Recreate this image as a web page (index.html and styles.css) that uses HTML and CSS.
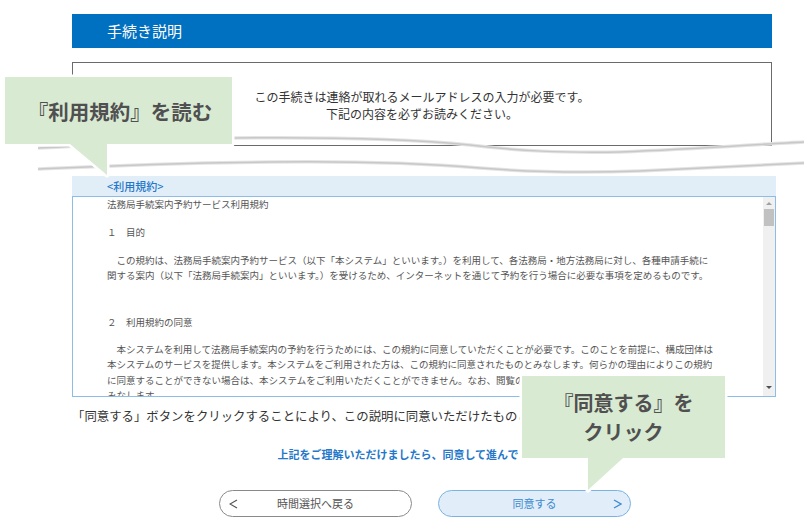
FILE: index.html
```html
<!DOCTYPE html>
<html lang="ja">
<head>
<meta charset="utf-8">
<title>手続き説明</title>
<link rel="stylesheet" href="styles.css">
</head>
<body>
<div class="page">
  <div class="titlebar">手続き説明</div>
  <div class="notice">
    <p>この手続きは連絡が取れるメールアドレスの入力が必要です。</p>
    <p>下記の内容を必ずお読みください。</p>
  </div>
  <div class="terms">
    <div class="terms-head">&lt;利用規約&gt;</div>
    <div class="terms-box">
      <div class="terms-text">
        <p class="t-title">法務局手続案内予約サービス利用規約</p>
        <p class="t-head">１　目的</p>
        <p class="t-para">　この規約は、法務局手続案内予約サービス（以下「本システム」といいます。）を利用して、各法務局・地方法務局に対し、各種申請手続に<br>関する案内（以下「法務局手続案内」といいます。）を受けるため、インターネットを通じて予約を行う場合に必要な事項を定めるものです。</p>
        <p class="t-head t-head2">２　利用規約の同意</p>
        <p class="t-para t-para2">　本システムを利用して法務局手続案内の予約を行うためには、この規約に同意していただくことが必要です。このことを前提に、構成団体は<br>本システムのサービスを提供します。本システムをご利用された方は、この規約に同意されたものとみなします。何らかの理由によりこの規約<br>に同意することができない場合は、本システムをご利用いただくことができません。なお、閲覧のみの場合でも、この規約に同意したものと<br>みなします。</p>
      </div>
      <div class="scrollbar">
        <span class="arrow-up"></span>
        <span class="thumb"></span>
        <span class="track"></span>
        <span class="arrow-down"></span>
      </div>
    </div>
  </div>
  <p class="agree-note">「同意する」ボタンをクリックすることにより、この説明に同意いただけたものとみなします。</p>
  <p class="proceed">上記をご理解いただけましたら、同意して進んでください。</p>
  <div class="buttons">
    <button class="btn btn-back" type="button">
      <svg class="chev chev-left" width="9" height="10" viewBox="0 0 9 10"><polyline points="8,1 1,5 8,9" fill="none" stroke="#555" stroke-width="1.2"/></svg>
      時間選択へ戻る
    </button>
    <button class="btn btn-agree" type="button">
      同意する
      <svg class="chev chev-right" width="9" height="10" viewBox="0 0 9 10"><polyline points="1,1 8,5 1,9" fill="none" stroke="#3d8bd0" stroke-width="1.3"/></svg>
    </button>
  </div>
</div>

<svg class="tear" width="804" height="50" viewBox="0 0 804 50">
  <path d="M38 18 C 90 16, 160 9, 233 8 C 330 7, 420 10, 470 15 C 520 21, 560 23, 620 22 C 700 19, 760 14, 804 12" fill="none" stroke="#e4e4e4" stroke-width="3.5"/>
  <path d="M38 18 C 90 16, 160 9, 233 8 C 330 7, 420 10, 470 15 C 520 21, 560 23, 620 22 C 700 19, 760 14, 804 12" fill="none" stroke="#c8c8c8" stroke-width="1.5"/>
  <path d="M38 39 C 80 37, 160 33, 270 32 C 350 31, 420 33, 480 38 C 530 42, 580 43, 640 41 C 710 38, 760 35, 804 33" fill="none" stroke="#e4e4e4" stroke-width="3.5"/>
  <path d="M38 39 C 80 37, 160 33, 270 32 C 350 31, 420 33, 480 38 C 530 42, 580 43, 640 41 C 710 38, 760 35, 804 33" fill="none" stroke="#c8c8c8" stroke-width="1.5"/>
</svg>

<div class="callout callout-read">
  <svg class="bubble" width="237" height="108" viewBox="-5 -5 237 108"><path d="M0 0 H227 V67 H102 V98 L65 67 H0 Z" fill="#d9ead3" stroke="#ffffff" stroke-width="5" stroke-linejoin="round" paint-order="stroke"/></svg>
  <span class="callout-text">『利用規約』を読む</span>
</div>
<div class="callout callout-click">
  <svg class="bubble" width="213" height="124" viewBox="-5 -5 213 124"><path d="M0 0 H203 V82 H101 L66 114 V82 H0 Z" fill="#d9ead3" stroke="#ffffff" stroke-width="5" stroke-linejoin="round" paint-order="stroke"/></svg>
  <span class="callout-text">『同意する』を<br>クリック</span>
</div>
</body>
</html>
```

FILE: styles.css
```css
html, body {
  margin: 0;
  padding: 0;
}

body {
  position: relative;
  width: 804px;
  height: 523px;
  overflow: hidden;
  background: #ffffff;
  color: #333333;
  font-family: "Noto Sans CJK JP", "Noto Sans", "Liberation Sans", sans-serif;
}

p {
  margin: 0;
}

.page {
  margin-left: 72px;
  width: 704px;
  padding-top: 14px;
}

.titlebar {
  width: 700px;
  height: 34px;
  box-sizing: border-box;
  padding-left: 35px;
  background: #0070c0;
  color: #ffffff;
  font-size: 15px;
  line-height: 34px;
}

.notice {
  width: 700px;
  height: 84px;
  margin-top: 14px;
  box-sizing: border-box;
  border: 1px solid #6b6b6b;
  padding-top: 25px;
  text-align: center;
  font-size: 12px;
  line-height: 17px;
  color: #333333;
}

.terms {
  margin-top: 30px;
  width: 704px;
}

.terms-head {
  height: 20px;
  box-sizing: border-box;
  padding-left: 35px;
  background: #e1eef8;
  color: #2477c9;
  font-size: 11px;
  line-height: 20px;
  font-weight: 500;
}

.terms-box {
  display: flex;
  height: 201px;
  box-sizing: border-box;
  border: 1px solid #8cbde6;
}

.terms-text {
  flex: 1;
  overflow: hidden;
  padding-left: 34px;
  font-size: 9.5px;
  line-height: 15.5px;
  color: #555555;
  white-space: nowrap;
}

.t-head {
  margin-top: 12px;
}

.t-para {
  margin-top: 12.5px;
}

.t-head2 {
  margin-top: 31px;
}

.t-para2 {
  margin-top: 11.5px;
}

.scrollbar {
  width: 12px;
  display: flex;
  flex-direction: column;
  align-items: center;
  background: #f0f0f0;
  padding: 5px 0 7px;
  box-sizing: border-box;
}

.arrow-up {
  width: 0;
  height: 0;
  border-left: 3px solid transparent;
  border-right: 3px solid transparent;
  border-bottom: 3px solid #a0a0a0;
}

.thumb {
  width: 10px;
  height: 17px;
  margin-top: 4px;
  background: #c1c1c1;
}

.track {
  flex: 1;
}

.arrow-down {
  width: 0;
  height: 0;
  border-left: 3px solid transparent;
  border-right: 3px solid transparent;
  border-top: 3px solid #505050;
}

.agree-note {
  margin-top: 10px;
  font-size: 12.4px;
  line-height: 18px;
  color: #333333;
  white-space: nowrap;
}

.proceed {
  margin-top: 21px;
  width: 707px;
  text-align: center;
  color: #2477c9;
  font-weight: bold;
  font-size: 11px;
  line-height: 16px;
  white-space: nowrap;
}

.buttons {
  display: flex;
  gap: 26px;
  margin-top: 28px;
  padding-left: 147px;
}

.btn {
  position: relative;
  width: 193px;
  height: 27px;
  box-sizing: border-box;
  border-radius: 14px;
  padding: 0;
  font-family: "Noto Sans CJK JP", "Noto Sans", sans-serif;
  font-size: 11px;
  line-height: 25px;
  text-align: center;
}

.btn-back {
  background: #ffffff;
  border: 1px solid #8a8a8a;
  color: #555555;
}

.btn-agree {
  background: #e1eef9;
  border: 1px solid #7ab3e2;
  color: #3d8bd0;
}

.chev {
  position: absolute;
  top: 8px;
}

.chev-left {
  left: 9px;
}

.chev-right {
  right: 8px;
}

.tear {
  position: absolute;
  left: 0;
  top: 130px;
}

.callout {
  position: absolute;
  display: flex;
  align-items: center;
  justify-content: center;
  color: #505050;
  font-weight: bold;
  text-align: center;
}

.bubble {
  position: absolute;
  left: -5px;
  top: -5px;
  overflow: visible;
}

.callout-text {
  position: relative;
}

.callout-read {
  left: 5px;
  top: 77px;
  width: 227px;
  height: 67px;
  font-size: 20.5px;
  line-height: 28px;
  padding-left: 3px;
  box-sizing: border-box;
}

.callout-click {
  left: 522px;
  top: 376px;
  width: 203px;
  height: 82px;
  font-size: 20px;
  line-height: 29px;
}
```
